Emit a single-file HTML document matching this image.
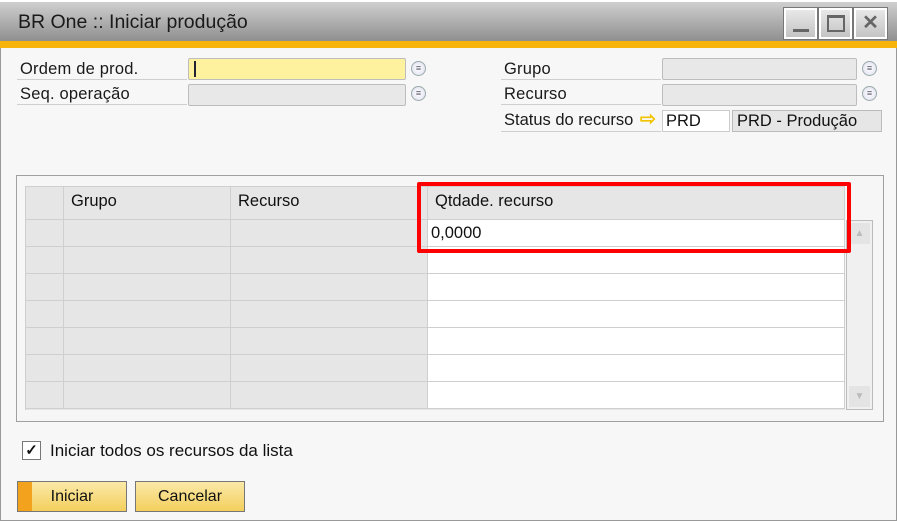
<!DOCTYPE html>
<html><head><meta charset="utf-8"><style>
*{margin:0;padding:0;box-sizing:border-box}
body{width:897px;height:521px;overflow:hidden;background:#fff;font-family:"Liberation Sans",sans-serif;font-size:16.5px;color:#111;position:relative}
.a{position:absolute}
.win{left:0;top:2px;width:897px;height:519px;background:#f7f7f7;border:1px solid #999}
.title{left:0;top:2px;width:897px;height:39px;background:linear-gradient(#cfcfcf,#8f8f8f)}
.stripe{left:0;top:41px;width:897px;height:7px;background:#f6b40c}
.tb{top:8px;width:33px;height:31px;border:2px solid #fff;outline:1px solid #777;background:linear-gradient(#e8e8e8,#c4c4c4)}
.lbl{font-size:16.5px;color:#1a1a1a;letter-spacing:0.2px}
.ul{height:1px;background:#cfcfcf}
.fld{border:1px solid #bdbdbd;border-radius:2px;background:#e8e8e8}
.ic{width:15px;height:15px;border-radius:50%;border:1px solid #9aa;background:radial-gradient(#fff,#dde);font-size:9px;line-height:13px;text-align:center;color:#556}
.cell{position:absolute;border-right:1px solid #cfcfcf;border-bottom:1px solid #cfcfcf}
.btn{top:481px;height:31px;border:1px solid #777;background:linear-gradient(#fbe9a8,#f3cf5c);font-size:16px;text-align:center;line-height:29px}
</style></head><body>
<div class="a win"></div>
<div class="a title"></div>
<div class="a stripe"></div>
<div class="a" style="left:18px;top:11px;font-size:19.5px;color:#1a1a1a">BR One :: Iniciar produção</div>
<div class="a tb" style="left:784px"><div class="a" style="left:7px;top:19px;width:16px;height:3px;background:#666"></div></div>
<div class="a tb" style="left:819px"><div class="a" style="left:6px;top:5px;width:18px;height:17px;border:2px solid #666;border-top-width:3px"></div></div>
<div class="a tb" style="left:854px;font-size:20px;font-weight:bold;color:#666;text-align:center;line-height:27px">✕</div>

<div class="a lbl" style="left:20px;top:60px">Ordem de prod.</div>
<div class="a ul" style="left:17px;top:79px;width:170px"></div>
<div class="a fld" style="left:188px;top:58px;width:218px;height:22px;background:#fff29e"></div>
<div class="a" style="left:194px;top:61px;width:2px;height:16px;background:#223"></div>
<div class="a ic" style="left:411px;top:61px">≡</div>
<div class="a lbl" style="left:20px;top:85px">Seq. operação</div>
<div class="a ul" style="left:17px;top:104px;width:170px"></div>
<div class="a fld" style="left:188px;top:84px;width:218px;height:22px"></div>
<div class="a ic" style="left:411px;top:86px">≡</div>

<div class="a lbl" style="left:504px;top:60px">Grupo</div>
<div class="a ul" style="left:501px;top:79px;width:160px"></div>
<div class="a fld" style="left:662px;top:58px;width:195px;height:22px"></div>
<div class="a ic" style="left:862px;top:61px">≡</div>
<div class="a lbl" style="left:504px;top:85px">Recurso</div>
<div class="a ul" style="left:501px;top:104px;width:160px"></div>
<div class="a fld" style="left:662px;top:84px;width:195px;height:22px"></div>
<div class="a ic" style="left:862px;top:86px">≡</div>
<div class="a lbl" style="left:504px;top:111px;letter-spacing:0">Status do recurso</div>
<div class="a" style="left:640px;top:108px;color:#f2c400;font-size:19px;font-weight:bold">⇨</div>
<div class="a ul" style="left:501px;top:131px;width:160px"></div>
<div class="a" style="left:662px;top:110px;width:68px;height:22px;background:#fff;border:1px solid #ccc;padding:1px 3px">PRD</div>
<div class="a" style="left:732px;top:110px;width:150px;height:22px;background:#e6e6e6;border:1px solid #bbb;padding:1px 4px">PRD - Produção</div>

<div class="a" style="left:16px;top:175px;width:868px;height:247px;border:1px solid #a0a0a0;background:#f6f6f6"></div>
<div class="a" style="left:25px;top:186px;width:820px;height:224px;border-left:1px solid #cfcfcf;border-top:1px solid #cfcfcf;background:#e6e6e6">
<div class="cell" style="left:0;top:0;width:38px;height:34px"></div>
<div class="cell" style="left:38px;top:0;width:167px;height:34px;padding:5px 7px">Grupo</div>
<div class="cell" style="left:205px;top:0;width:197px;height:34px;padding:5px 7px">Recurso</div>
<div class="cell" style="left:402px;top:0;width:417px;height:34px;padding:5px 7px">Qtdade. recurso</div>
</div>
<div id="rows"></div>
<div class="a" style="left:25px;top:219px;width:820px;height:1px;background:#cfcfcf"></div>
<div class="a" style="left:846px;top:220px;width:27px;height:190px;border:1px solid #bbb;background:#f0f0f0">
<div class="a" style="left:2px;top:2px;width:21px;height:21px;background:#e4e4e4;color:#bbb;font-size:10px;text-align:center;line-height:21px">▲</div>
<div class="a" style="left:2px;top:165px;width:21px;height:21px;background:#e4e4e4;color:#bbb;font-size:10px;text-align:center;line-height:21px">▼</div>
</div>
<script>
var h='';for(var i=0;i<7;i++){var t=220+i*27;
h+='<div class="cell" style="left:25px;top:'+t+'px;width:39px;height:27px;background:#e6e6e6;border-left:1px solid #cfcfcf"></div>';
h+='<div class="cell" style="left:64px;top:'+t+'px;width:167px;height:27px;background:#e6e6e6"></div>';
h+='<div class="cell" style="left:231px;top:'+t+'px;width:197px;height:27px;background:#e6e6e6"></div>';
h+='<div class="cell" style="left:428px;top:'+t+'px;width:417px;height:27px;background:#fff;padding:4px 3px">'+(i==0?'0,0000':'')+'</div>';}
document.getElementById('rows').outerHTML=h;
</script>
<div class="a" style="left:417px;top:182px;width:434px;height:71px;border:4px solid #f00;border-radius:2px"></div>

<div class="a" style="left:22px;top:441px;width:19px;height:19px;border:1px solid #777;background:#fff;text-align:center;font-size:15px;line-height:17px;font-weight:bold">✓</div>
<div class="a" style="left:50px;top:441px;font-size:17px">Iniciar todos os recursos da lista</div>
<div class="a btn" style="left:17px;width:110px;background:linear-gradient(90deg,#f2a21c 0,#f2a21c 14px,transparent 14px),linear-gradient(#fbe9a8,#f3cf5c)">Iniciar</div>
<div class="a btn" style="left:135px;width:110px">Cancelar</div>
</body></html>
